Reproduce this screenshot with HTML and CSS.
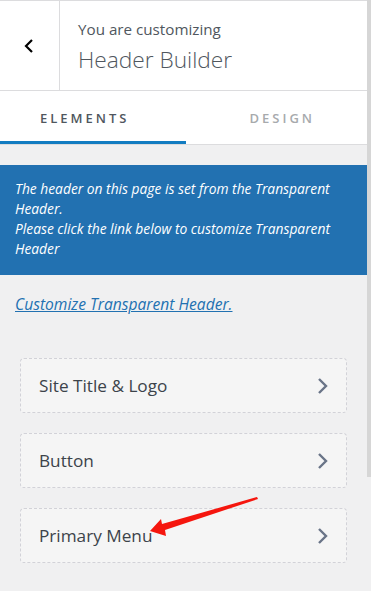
FILE: index.html
```html
<!DOCTYPE html>
<html lang="en">
<head>
<meta charset="UTF-8" />
<meta name="viewport" content="width=device-width, initial-scale=1" />
<title>Header Builder</title>
<link rel="stylesheet" href="styles.css">
</head>
<body>

<div class="panel">
  <header class="panel-head">
    <button class="back-btn" aria-label="Back">
      <svg width="12" height="16" viewBox="0 0 12 16"><path d="M9 2 L3 8 L9 14" fill="none" stroke="#000" stroke-width="2.2" /></svg>
    </button>
    <div class="head-title">
      <span class="head-small">You are customizing</span>
      <h1>Header Builder</h1>
    </div>
  </header>

  <nav class="tabs">
    <div class="tab tab-active">ELEMENTS</div>
    <div class="tab tab-design">DESIGN</div>
  </nav>

  <div class="notice">
    The header on this page is set from the Transparent Header.<br>
    Please click the link below to customize Transparent Header
  </div>

  <p class="notice-link"><a href="#">Customize Transparent Header.</a></p>

  <ul class="elements">
    <li class="element">
      <span>Site Title &amp; Logo</span>
      <svg class="chev" width="12" height="18" viewBox="0 0 12 18"><path d="M2 2 L9 9 L2 16" fill="none" stroke="#697487" stroke-width="2.4" /></svg>
    </li>
    <li class="element">
      <span>Button</span>
      <svg class="chev" width="12" height="18" viewBox="0 0 12 18"><path d="M2 2 L9 9 L2 16" fill="none" stroke="#697487" stroke-width="2.4" /></svg>
    </li>
    <li class="element">
      <span>Primary Menu</span>
      <svg class="chev" width="12" height="18" viewBox="0 0 12 18"><path d="M2 2 L9 9 L2 16" fill="none" stroke="#697487" stroke-width="2.4" /></svg>
    </li>
  </ul>
</div>

<div class="scrollbar"><div class="thumb"></div></div>

<!-- annotation arrow over the list -->
<svg class="arrow" width="120" height="45" viewBox="0 0 120 45">
  <polygon points="2,39 13,27 14,32 109,5 110,7 17,38 18,44" fill="#f5160e" />
</svg>

</body>
</html>
```

FILE: styles.css
```css
body {
  margin: 0;
  width: 371px;
  height: 591px;
  overflow: hidden;
  display: flex;
  background: #f0f0f1;
  font-family: "Open Sans", "Noto Sans", sans-serif;
  position: relative;
}
.panel {
  flex: 1;
  min-width: 0;
}
.scrollbar {
  width: 4px;
  background: #f0f0f1;
}
.thumb {
  height: 477px;
  background: #d6d6d6;
}

.panel-head {
  display: flex;
  height: 89px;
  background: #fff;
  border-top: 1px solid #dcdcde;
  border-bottom: 1px solid #dcdcde;
}
.back-btn {
  width: 60px;
  border: none;
  border-right: 1px solid #dcdcde;
  background: #fff;
  display: flex;
  align-items: center;
  justify-content: center;
  padding: 0 2px 0 0;
}
.head-title {
  padding: 16px 0 0 18px;
}
.head-small {
  display: block;
  font-size: 15.2px;
  color: #50575e;
  line-height: 24px;
}
.head-title h1 {
  margin: 4px 0 0;
  font-size: 22.7px;
  font-weight: 300;
  color: #50575e;
  line-height: 30px;
}

.tabs {
  display: flex;
  height: 53px;
  background: #fff;
  border-bottom: 1px solid #dcdcde;
}
.tab {
  flex: 1;
  display: flex;
  align-items: center;
  justify-content: center;
  font-size: 13px;
  font-weight: 600;
  letter-spacing: 3px;
  color: #a7aaad;
  box-sizing: border-box;
}
.tab-active {
  color: #50575e;
  border-bottom: 3px solid #127cc1;
  padding: 3px 16px 0 0;
}
.tab-design {
  padding-left: 12px;
}

.notice {
  margin-top: 20px;
  background: #2271b1;
  color: #fff;
  font-style: italic;
  font-size: 13.8px;
  line-height: 20px;
  padding: 14px 15px 16px;
}

.notice-link {
  margin: 19px 0 0 15px;
  font-size: 15.6px;
  line-height: 20px;
  font-style: italic;
}
.notice-link a {
  color: #2271b1;
}

.elements {
  list-style: none;
  margin: 44px 20px 0;
  padding: 0;
  display: flex;
  flex-direction: column;
  gap: 20px;
}
.element {
  height: 53px;
  border: 1px dashed #d2d2d8;
  border-radius: 4px;
  background: #f5f5f5;
  display: flex;
  align-items: center;
  justify-content: space-between;
  padding: 0 17px 0 18px;
  font-size: 17.2px;
  color: #3c434a;
}
.chev {
  display: block;
}

.arrow {
  position: absolute;
  left: 148px;
  top: 492px;
}
```
